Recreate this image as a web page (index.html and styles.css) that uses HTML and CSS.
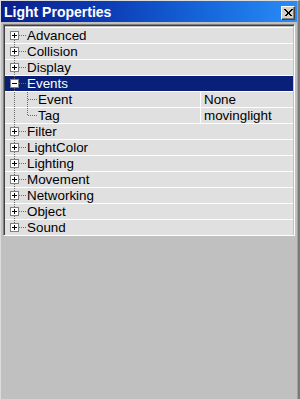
FILE: index.html
```html
<!DOCTYPE html>
<html>
<head>
<meta charset="utf-8">
<link rel="stylesheet" href="styles.css">
</head>
<body>
<div class="window">
  <div class="titlebar">
    <span class="title">Light Properties</span>
    <span class="close"><svg width="12" height="12" viewBox="0 0 12 12"><path d="M2.5 2.5 L9.5 9.5 M3.5 2.5 L10.5 9.5 M9.5 2.5 L2.5 9.5 M10.5 2.5 L3.5 9.5" stroke="#000" stroke-width="1" shape-rendering="crispEdges"/></svg></span>
  </div>
  <div class="grid">
    <div class="row"><svg class="tree" width="22" height="15"><line x1="9.5" y1="12" x2="9.5" y2="15" class="dot"/><line x1="14" y1="7.5" x2="22" y2="7.5" class="dot"/><rect x="5.5" y="3.5" width="8" height="8" class="box"/><path d="M7 7.5H12M9.5 5V10" class="sign"/></svg><span class="label">Advanced</span></div>
    <div class="row"><svg class="tree" width="22" height="15"><line x1="9.5" y1="0" x2="9.5" y2="3" class="dot"/><line x1="9.5" y1="12" x2="9.5" y2="15" class="dot"/><line x1="14" y1="7.5" x2="22" y2="7.5" class="dot"/><rect x="5.5" y="3.5" width="8" height="8" class="box"/><path d="M7 7.5H12M9.5 5V10" class="sign"/></svg><span class="label">Collision</span></div>
    <div class="row"><svg class="tree" width="22" height="15"><line x1="9.5" y1="0" x2="9.5" y2="3" class="dot"/><line x1="9.5" y1="12" x2="9.5" y2="15" class="dot"/><line x1="14" y1="7.5" x2="22" y2="7.5" class="dot"/><rect x="5.5" y="3.5" width="8" height="8" class="box"/><path d="M7 7.5H12M9.5 5V10" class="sign"/></svg><span class="label">Display</span></div>
    <div class="row selected"><svg class="tree" width="22" height="15"><line x1="9.5" y1="0" x2="9.5" y2="3" class="dot"/><line x1="9.5" y1="12" x2="9.5" y2="15" class="dot"/><line x1="14" y1="7.5" x2="22" y2="7.5" class="dot"/><rect x="5.5" y="3.5" width="8" height="8" class="box"/><path d="M7 7.5H12" class="sign"/></svg><span class="label">Events</span></div>
    <div class="row"><svg class="tree child" width="33" height="15"><line x1="9.5" y1="0" x2="9.5" y2="15" class="dot"/><line x1="22.5" y1="0" x2="22.5" y2="15" class="dot"/><line x1="23" y1="7.5" x2="32" y2="7.5" class="dot"/></svg><span class="label key">Event</span><span class="value">None</span></div>
    <div class="row"><svg class="tree child" width="33" height="15"><line x1="9.5" y1="0" x2="9.5" y2="15" class="dot"/><line x1="22.5" y1="0" x2="22.5" y2="8" class="dot"/><line x1="23" y1="7.5" x2="32" y2="7.5" class="dot"/></svg><span class="label key">Tag</span><span class="value">movinglight</span></div>
    <div class="row"><svg class="tree" width="22" height="15"><line x1="9.5" y1="0" x2="9.5" y2="3" class="dot"/><line x1="9.5" y1="12" x2="9.5" y2="15" class="dot"/><line x1="14" y1="7.5" x2="22" y2="7.5" class="dot"/><rect x="5.5" y="3.5" width="8" height="8" class="box"/><path d="M7 7.5H12M9.5 5V10" class="sign"/></svg><span class="label">Filter</span></div>
    <div class="row"><svg class="tree" width="22" height="15"><line x1="9.5" y1="0" x2="9.5" y2="3" class="dot"/><line x1="9.5" y1="12" x2="9.5" y2="15" class="dot"/><line x1="14" y1="7.5" x2="22" y2="7.5" class="dot"/><rect x="5.5" y="3.5" width="8" height="8" class="box"/><path d="M7 7.5H12M9.5 5V10" class="sign"/></svg><span class="label">LightColor</span></div>
    <div class="row"><svg class="tree" width="22" height="15"><line x1="9.5" y1="0" x2="9.5" y2="3" class="dot"/><line x1="9.5" y1="12" x2="9.5" y2="15" class="dot"/><line x1="14" y1="7.5" x2="22" y2="7.5" class="dot"/><rect x="5.5" y="3.5" width="8" height="8" class="box"/><path d="M7 7.5H12M9.5 5V10" class="sign"/></svg><span class="label">Lighting</span></div>
    <div class="row"><svg class="tree" width="22" height="15"><line x1="9.5" y1="0" x2="9.5" y2="3" class="dot"/><line x1="9.5" y1="12" x2="9.5" y2="15" class="dot"/><line x1="14" y1="7.5" x2="22" y2="7.5" class="dot"/><rect x="5.5" y="3.5" width="8" height="8" class="box"/><path d="M7 7.5H12M9.5 5V10" class="sign"/></svg><span class="label">Movement</span></div>
    <div class="row"><svg class="tree" width="22" height="15"><line x1="9.5" y1="0" x2="9.5" y2="3" class="dot"/><line x1="9.5" y1="12" x2="9.5" y2="15" class="dot"/><line x1="14" y1="7.5" x2="22" y2="7.5" class="dot"/><rect x="5.5" y="3.5" width="8" height="8" class="box"/><path d="M7 7.5H12M9.5 5V10" class="sign"/></svg><span class="label">Networking</span></div>
    <div class="row"><svg class="tree" width="22" height="15"><line x1="9.5" y1="0" x2="9.5" y2="3" class="dot"/><line x1="9.5" y1="12" x2="9.5" y2="15" class="dot"/><line x1="14" y1="7.5" x2="22" y2="7.5" class="dot"/><rect x="5.5" y="3.5" width="8" height="8" class="box"/><path d="M7 7.5H12M9.5 5V10" class="sign"/></svg><span class="label">Object</span></div>
    <div class="row"><svg class="tree" width="22" height="15"><line x1="9.5" y1="0" x2="9.5" y2="3" class="dot"/><line x1="14" y1="7.5" x2="22" y2="7.5" class="dot"/><rect x="5.5" y="3.5" width="8" height="8" class="box"/><path d="M7 7.5H12M9.5 5V10" class="sign"/></svg><span class="label">Sound</span></div>
  </div>
</div>
</body>
</html>
```

FILE: styles.css
```css
html, body {
  margin: 0;
  padding: 0;
  background: #c0c0c0;
}

.window {
  box-sizing: border-box;
  width: 300px;
  height: 399px;
  background: #c0c0c0;
  border-left: 1px solid #dcdcdc;
  border-top: 1px solid #dcdcdc;
  border-right: 2px solid #7a7a7a;
  box-shadow: inset -1px 0 0 #a0a0a0;
  font-family: "Liberation Sans", Arial, sans-serif;
  display: flex;
  flex-direction: column;
}

.titlebar {
  height: 21px;
  flex: none;
  margin-right: 1px;
  background: linear-gradient(to right, #0a1f8c 0%, #0c3cb4 35%, #1668dc 70%, #2a8cf6 100%);
  display: flex;
  align-items: center;
  justify-content: space-between;
  padding: 0 2px 0 3px;
}

.title {
  color: #fff;
  font-weight: bold;
  font-size: 14px;
  line-height: 21px;
  margin-top: 1px;
}

.close {
  box-sizing: border-box;
  width: 14px;
  height: 14px;
  margin-top: 3px;
  background: #d4d0c8;
  border-top: 1px solid #fff;
  border-left: 1px solid #fff;
  border-right: 1px solid #404040;
  border-bottom: 1px solid #404040;
  box-shadow: inset -1px -1px 0 #808080;
  display: flex;
  align-items: center;
  justify-content: center;
}

.close svg {
  display: block;
}

.grid {
  margin: 2px 3px 0 2px;
  border-top: 1px solid #808080;
  border-left: 1px solid #808080;
  border-right: 1px solid #fff;
  border-bottom: 1px solid #fff;
  box-shadow: inset 1px 1px 0 #404040;
  padding: 2px 1px 0 1px;
  display: flex;
  flex-direction: column;
}

.row {
  box-sizing: border-box;
  height: 16px;
  border-top: 1px solid #fff;
  background: #e0e0e0;
  display: flex;
  align-items: stretch;
  font-size: 13.4px;
  line-height: 15px;
  color: #000;
}

.row.selected {
  background: #0a1f78;
  color: #fff;
}

.tree {
  flex: none;
  display: block;
}

.dot {
  stroke: #6a6a6a;
  stroke-width: 1;
  stroke-dasharray: 1 1;
  shape-rendering: crispEdges;
}

.box {
  fill: #fff;
  stroke: #808080;
  stroke-width: 1;
  shape-rendering: crispEdges;
}

.sign {
  stroke: #000;
  stroke-width: 1;
  fill: none;
  shape-rendering: crispEdges;
}

.label {
  flex: 1;
  white-space: nowrap;
}

.label.key {
  flex: none;
  width: 162px;
  border-right: 1px solid #fff;
}

.value {
  flex: 1;
  padding-left: 3px;
  white-space: nowrap;
}
```
